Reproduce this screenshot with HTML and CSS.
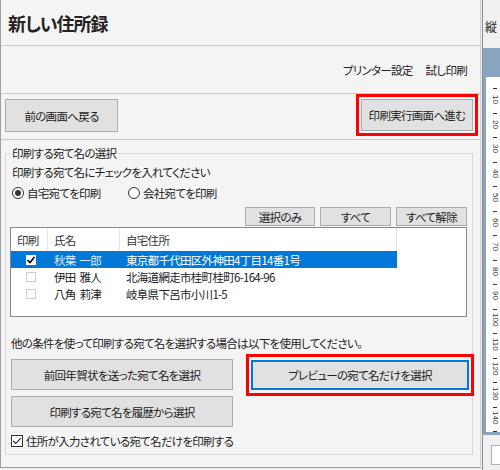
FILE: index.html
```html
<!DOCTYPE html>
<html lang="ja">
<head>
    <meta charset="UTF-8" />
    <title>新しい住所録</title>
    <link rel="stylesheet" href="styles.css">
</head>
<body>

<div class="window">
    <!-- Main panel -->
    <div class="main">
        <header class="title-bar">
            <h1>新しい住所録</h1>
        </header>

        <div class="tool-bar">
            <span>プリンター設定</span>
            <span>試し印刷</span>
        </div>

        <div class="nav-row">
            <button class="btn btn-back">前の画面へ戻る</button>
            <div class="highlight hl-next">
                <button class="btn btn-next">印刷実行画面へ進む</button>
            </div>
        </div>

        <fieldset class="group">
            <legend>印刷する宛て名の選択</legend>
            <p class="hint">印刷する宛て名にチェックを入れてください</p>

            <div class="radios">
                <label class="radio-item first"><span class="radio on"></span>自宅宛てを印刷</label>
                <label class="radio-item"><span class="radio"></span>会社宛てを印刷</label>
            </div>

            <div class="list-actions">
                <button class="btn btn-small w70">選択のみ</button>
                <button class="btn btn-small w71">すべて</button>
                <button class="btn btn-small w71">すべて解除</button>
            </div>

            <div class="list">
                <div class="list-head">
                    <div class="hc c1">印刷</div>
                    <div class="hc c2">氏名</div>
                    <div class="hc c3">自宅住所</div>
                </div>
                <div class="row sel">
                    <div class="c1"><span class="cb-small checked"><svg viewBox="0 0 10 10" width="10" height="10"><polyline points="1.5,5 4,7.5 8.5,2" fill="none" stroke="#000" stroke-width="1.6"/></svg></span></div>
                    <div class="c2 name">秋葉&nbsp;一郎</div>
                    <div class="c3">東京都千代田区外神田4丁目14番1号</div>
                </div>
                <div class="row">
                    <div class="c1"><span class="cb-small"></span></div>
                    <div class="c2">伊田&nbsp;雅人</div>
                    <div class="c3">北海道網走市桂町桂町6-164-96</div>
                </div>
                <div class="row">
                    <div class="c1"><span class="cb-small"></span></div>
                    <div class="c2">八角&nbsp;莉津</div>
                    <div class="c3">岐阜県下呂市小川1-5</div>
                </div>
            </div>

            <p class="hint hint2">他の条件を使って印刷する宛て名を選択する場合は以下を使用してください。</p>

            <div class="cond">
                <div class="cond-left">
                    <button class="btn btn-wide">前回年賀状を送った宛て名を選択</button>
                    <button class="btn btn-wide">印刷する宛て名を履歴から選択</button>
                </div>
                <div class="highlight hl-preview">
                    <button class="btn btn-focus">プレビューの宛て名だけを選択</button>
                </div>
            </div>

            <label class="check-row">
                <span class="cb"><svg viewBox="0 0 12 12" width="10" height="10"><polyline points="1.5,6 4.5,9 10.5,2.5" fill="none" stroke="#222" stroke-width="1.3"/></svg></span>
                住所が入力されている宛て名だけを印刷する
            </label>
        </fieldset>
    </div>

    <!-- Preview side panel -->
    <aside class="side">
        <div class="side-top">縦</div>
        <div class="side-view">
            <div class="ruler" id="ruler"></div>
        </div>
        <div class="side-bottom">
            <div class="side-box"></div>
        </div>
    </aside>
</div>

<script>
    // build ruler ticks and numbers
    const ruler = document.getElementById('ruler');
    let html = '';
    for (let i = 1; i <= 14; i++) {
        html += `<div class="tick-cell"><div class="tick"></div><div class="num"><span>${i * 10}</span></div></div>`;
    }
    html += '<div class="tick-cell"><div class="tick"></div></div>';
    ruler.innerHTML = html;
</script>

</body>
</html>
```

FILE: styles.css
```css
/* Basic Styles */
* {
    box-sizing: border-box;
}

body {
    margin: 0;
    font-family: "Noto Sans CJK JP", sans-serif;
    font-size: 11.5px;
    letter-spacing: -0.7px;
    color: #222;
    background-color: #f0f0f0;
    font-feature-settings: "palt" 1;
}

.window {
    display: flex;
    width: 500px;
    height: 470px;
    overflow: hidden;
}

.main {
    width: 481px;
    height: 468px;
    flex-shrink: 0;
    background-color: #f4f4f4;
    border-left: 1px solid #a0a0a0;
    border-right: 1px solid #d0d0d0;
    border-bottom: 1px solid #a0a0a0;
}

.title-bar {
    height: 46px;
    display: flex;
    align-items: center;
    padding-left: 7px;
    border-bottom: 1px solid #c8c8c8;
}

h1 {
    margin: 0;
    font-size: 18px;
    font-weight: bold;
    line-height: 1;
    letter-spacing: -1px;
    color: #222;
}

.tool-bar {
    height: 48px;
    display: flex;
    justify-content: flex-end;
    align-items: center;
    gap: 13px;
    padding-right: 13px;
    border-bottom: 1px solid #c8c8c8;
}

.nav-row {
    height: 46px;
    display: flex;
    justify-content: space-between;
    align-items: flex-start;
    padding: 0 2px 0 4px;
    border-bottom: 1px solid #c8c8c8;
}

/* Buttons */
.btn {
    font: inherit;
    letter-spacing: inherit;
    font-feature-settings: "palt" 1;
    color: #222;
    background-color: #e1e1e1;
    border: 1px solid #adadad;
    padding: 0;
    cursor: pointer;
}

.btn-back {
    width: 113px;
    height: 33px;
    margin-top: 5px;
}

.highlight {
    border: 3px solid #ff0000;
    padding: 2px;
}

.btn-next {
    display: block;
    width: 112px;
    height: 32px;
}

/* Group box */
.group {
    margin: 6px 7px 0 4px;
    padding: 0 5px 6px 4px;
    border: 1px solid #d8d8d8;
}

.group legend {
    padding: 0 2px;
    line-height: 14px;
}

.hint {
    margin: 5px 0 0 2px;
    line-height: 14px;
}

.hint2 {
    margin-top: 19px;
    margin-left: 1px;
}

.radios {
    display: flex;
    align-items: center;
    height: 14px;
    margin-top: 7px;
    padding-left: 2px;
}

.radio-item {
    display: flex;
    align-items: center;
}

.radio-item.first {
    width: 116px;
}

.radio {
    width: 12px;
    height: 12px;
    margin-right: 3px;
    border: 1px solid #333;
    border-radius: 50%;
    background-color: #fff;
    display: flex;
    align-items: center;
    justify-content: center;
}

.radio.on::after {
    content: "";
    width: 6px;
    height: 6px;
    border-radius: 50%;
    background-color: #333;
}

.list-actions {
    display: flex;
    justify-content: flex-end;
    gap: 5px;
    margin-top: 7px;
}

.btn-small {
    height: 19px;
}

.w70 {
    width: 70px;
}

.w71 {
    width: 71px;
}

/* List view */
.list {
    height: 90px;
    margin-top: 1px;
    background-color: #fff;
    border: 1px solid #828790;
}

.list-head {
    display: flex;
    height: 23px;
}

.hc {
    display: flex;
    align-items: center;
    border-right: 1px solid #e5e5e5;
    color: #333;
}

.c1 {
    width: 37px;
    padding-left: 6px;
}

.c2 {
    width: 72px;
    padding-left: 6px;
    word-spacing: 2px;
}

.c3 {
    width: 277px;
    padding-left: 6px;
}

.row {
    display: flex;
    align-items: center;
    width: 386px;
    height: 17px;
}

.row .c1 {
    padding-left: 15px;
    display: flex;
    align-items: center;
}

.row.sel {
    background-color: #0078d7;
    color: #fff;
}

.row.sel .name {
    color: #dbe8f7;
}

.cb-small {
    width: 10px;
    height: 10px;
    border: 1px solid #cfcfcf;
    background-color: #fff;
    display: block;
}

.cb-small.checked {
    border: none;
}

.cb-small svg {
    display: block;
}

/* Other conditions */
.cond {
    display: flex;
    align-items: flex-start;
    margin-top: 4px;
    margin-right: -7px;
}

.cond-left {
    display: flex;
    flex-direction: column;
    gap: 6px;
    width: 222px;
    margin: 5px 0 0 1px;
}

.btn-wide {
    height: 31px;
}

.hl-preview {
    flex: 1;
    margin-left: 13px;
    padding: 3px 2px;
}

.btn-focus {
    display: block;
    width: 100%;
    height: 30px;
    border: 2px solid #0078d7;
}

.check-row {
    display: flex;
    align-items: center;
    margin: 7px 0 0 1px;
    line-height: 14px;
}

.cb {
    width: 12px;
    height: 12px;
    margin-right: 3px;
    border: 1px solid #333;
    background-color: #fff;
    display: flex;
    align-items: center;
    justify-content: center;
}

/* Side preview panel */
.side {
    flex: 1;
    height: 470px;
    margin-left: 1px;
    border-left: 1px solid #8c8c8c;
    background-color: #f0f0f0;
    display: flex;
    flex-direction: column;
}

.side-top {
    height: 48px;
    padding: 20px 0 0 2px;
    font-size: 12px;
    line-height: 14px;
    white-space: nowrap;
    overflow: hidden;
}

.side-view {
    height: 387px;
    display: flex;
    flex-direction: column;
    padding: 29px 0 3px 3px;
    background-color: #88a4c0;
}

.ruler {
    flex: 1;
    padding-top: 11px;
    background-color: #fff;
    overflow: hidden;
}

.tick-cell {
    height: 24.5px;
    display: flex;
    flex-direction: column;
    align-items: center;
    padding-left: 4px;
}

.tick {
    width: 4px;
    height: 1px;
    background-color: #333;
}

.num {
    height: 21px;
    display: flex;
    align-items: center;
}

.num span {
    writing-mode: vertical-rl;
    font-family: "Liberation Sans", sans-serif;
    font-size: 8px;
    letter-spacing: 0;
    line-height: 1;
    color: #333;
}

.side-bottom {
    flex: 1;
    padding: 10px 0 0 8px;
}

.side-box {
    height: 20px;
    background-color: #fff;
    border: 1px solid #b0b0b0;
    border-right: none;
}
```
